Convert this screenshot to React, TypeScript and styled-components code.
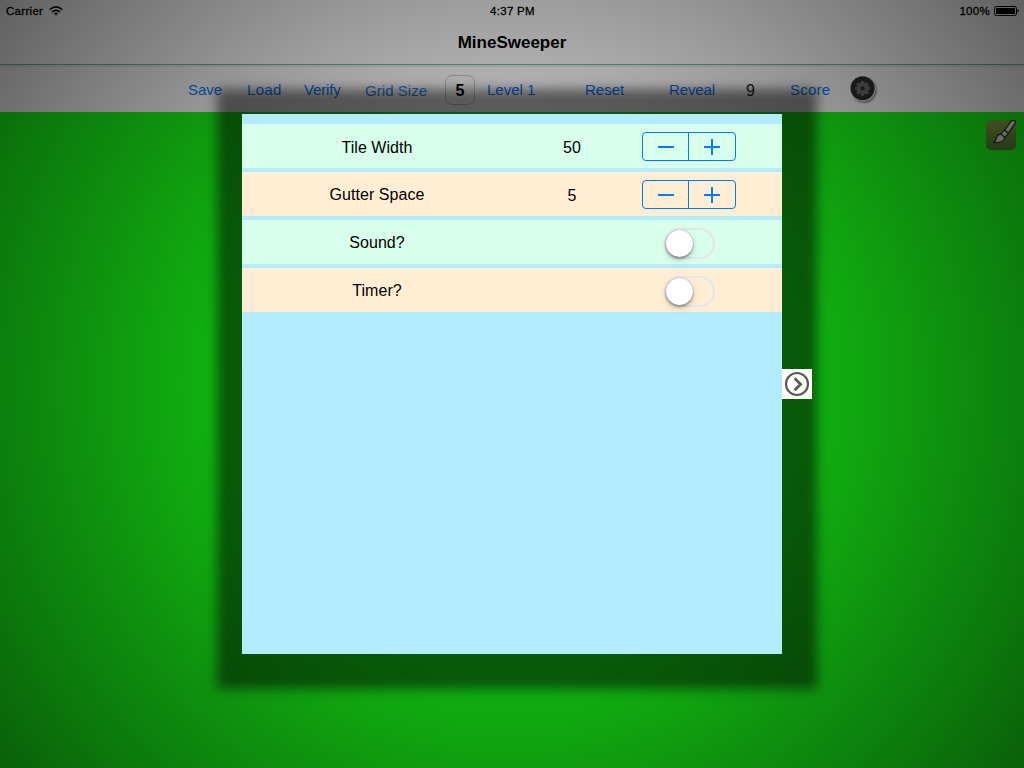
import React from 'react';
import styled, { createGlobalStyle } from 'styled-components';

const Global = createGlobalStyle`
  * { box-sizing: border-box; }
  body { margin: 0; overflow: hidden; font-family: "Liberation Sans", Arial, sans-serif; }
`;

const Screen = styled.div`
  position: relative;
  display: flex;
  flex-direction: column;
  width: 1024px;
  height: 768px;
  overflow: hidden;
  background: #18f818;
`;

const StatusBar = styled.div`
  display: grid;
  grid-template-columns: 1fr auto 1fr;
  align-items: center;
  height: 21px;
  padding: 1px 5px 0 6px;
  background: #f8f8f8;
  font-size: 11.5px;
  letter-spacing: 0.3px;
  -webkit-text-stroke: 0.3px #000;
`;

const StatusSide = styled.div<{ $end?: boolean }>`
  display: flex;
  align-items: center;
  gap: ${(p) => (p.$end ? 4 : 6)}px;
  justify-content: ${(p) => (p.$end ? 'flex-end' : 'flex-start')};
`;

const NavBar = styled.header`
  display: flex;
  justify-content: center;
  height: 46px;
  padding-top: 12px;
  background: #f8f8f8;
  border-bottom: 2px solid #cdf3e1;
  box-shadow: inset 0 -1px 0 #86ac9b;
  font-size: 17px;
  font-weight: 700;
  line-height: 20px;
`;

const Toolbar = styled.div`
  display: flex;
  align-items: center;
  height: 45px;
  padding-left: 188px;
  background: #f9f7f9;
`;

const ToolText = styled.span<{ $w: number; $gap: number; $tone?: string; $drop?: number; $ls?: number; $size?: number }>`
  flex: none;
  width: ${(p) => p.$w}px;
  margin-right: ${(p) => p.$gap}px;
  padding-top: ${(p) => p.$drop ?? 0}px;
  color: ${(p) => p.$tone ?? '#007aff'};
  font-size: ${(p) => p.$size ?? 15}px;
  line-height: 18px;
  letter-spacing: ${(p) => p.$ls ?? 0}px;
  white-space: nowrap;
`;

const SizeField = styled.div`
  flex: none;
  display: flex;
  align-items: center;
  justify-content: center;
  width: 30px;
  height: 30px;
  margin-right: 12px;
  padding-top: 2px;
  border: 1px solid #c4c4c4;
  border-radius: 7px;
  font-size: 16px;
  font-weight: 700;
`;

const GearIcon = styled.svg`
  flex: none;
  width: 30px;
  height: 30px;
  margin-bottom: 1px;
`;

const Board = styled.main`
  flex: 1;
  display: flex;
  align-items: flex-start;
  justify-content: flex-end;
  padding: 8px 8px 0 0;
`;

const Dim = styled.div`
  position: absolute;
  inset: 0;
  background: radial-gradient(circle 640px at 512px 384px, rgba(0, 0, 0, 0) 0, rgba(0, 0, 0, 0.61) 640px);
`;

const Dialog = styled.section`
  position: absolute;
  left: 242px;
  top: 114px;
  width: 540px;
  height: 540px;
  padding-top: 10px;
  display: flex;
  flex-direction: column;
  gap: 4px;
  background: #b3ebff;
  box-shadow: 5px 5px 11px 30px rgba(0, 0, 0, 0.5);
`;

const Row = styled.div<{ $warm?: boolean }>`
  display: grid;
  grid-template-columns: 270px 120px 150px;
  align-items: center;
  height: 44px;
  background: ${(p) => (p.$warm ? '#ffeed3' : '#d8ffeb')};
  font-size: 16px;
  line-height: 18px;
`;

const Label = styled.span<{ $drop: number }>`
  text-align: center;
  letter-spacing: 0.05px;
  padding-top: ${(p) => p.$drop}px;
`;

const Value = styled.span`
  text-align: center;
  padding-top: 4px;
`;

const Control = styled.div`
  display: flex;
  padding-left: 10px;
`;

const Stepper = styled.div`
  display: flex;
  width: 94px;
  height: 29px;
  border: 1px solid #007aff;
  border-radius: 4px;
`;

const StepButton = styled.button`
  flex: none;
  width: 45px;
  display: flex;
  align-items: center;
  justify-content: center;
  padding: 1px 0 0 1px;
  border: 0;
  background: none;
  & + & {
    width: 47px;
    padding-left: 0;
    border-left: 1px solid #007aff;
  }
`;

const Switch = styled.div`
  width: 51px;
  height: 31px;
  margin: 3px 0 0 22px;
  border: 2px solid #e5e5e5;
  border-radius: 16px;
`;

const Knob = styled.div`
  width: 27px;
  height: 27px;
  border-radius: 50%;
  background: #fff;
  box-shadow: 0 0 1px rgba(0, 0, 0, 0.4), 0 2px 3px rgba(0, 0, 0, 0.35), 0 3px 8px rgba(0, 0, 0, 0.12);
`;

const NextTab = styled.button`
  position: absolute;
  left: 540px;
  top: 255px;
  width: 30px;
  height: 30px;
  padding: 0;
  border: 0;
  background: #fffffa;
  svg { display: block; }
`;

const Minus = () => (
  <svg width="16" height="16"><path d="M0 8H16" stroke="#007aff" strokeWidth="2" /></svg>
);
const Plus = () => (
  <svg width="16" height="16"><path d="M0 8H16M8 0V16" stroke="#007aff" strokeWidth="2" /></svg>
);

const Wifi = () => (
  <svg width="14" height="10" viewBox="0 0 14 10" fill="none" stroke="#000" strokeWidth="1.5">
    <path d="M.8 3.6Q7-1.8 13.2 3.6M3 6Q7 2.5 11 6" />
    <path d="M4.9 7.4Q7 5.6 9.1 7.4L7 9.6Z" fill="#000" stroke="none" />
  </svg>
);

const Battery = () => (
  <svg width="25" height="10" viewBox="0 0 25 10">
    <rect x=".5" y=".5" width="22" height="9" rx="1.8" fill="none" stroke="#000" />
    <rect x="2" y="2" width="19" height="6" rx=".6" />
    <path d="M23.5 3.2Q25 3.7 25 5T23.5 6.8Z" />
  </svg>
);

const Gear = () => (
  <GearIcon viewBox="0 0 30 30">
    <defs>
      <filter id="gearShadow" x="-30%" y="-30%" width="160%" height="160%">
        <feDropShadow dx="1" dy="1.2" stdDeviation="1" floodOpacity=".6" />
      </filter>
    </defs>
    <circle cx="15.2" cy="15" r="12.2" fill="#dcdcdc" filter="url(#gearShadow)" />
    <circle cx="14.6" cy="14.3" r="12" fill="#2d2d2d" />
    <g fill="#6c6c6c">
      <circle cx="14.6" cy="14.4" r="5.6" />
      {[0, 45, 90, 135].map((a) => (
        <rect key={a} x="12.9" y="7" width="3.4" height="14.8" rx=".6" transform={`rotate(${a} 14.6 14.4)`} />
      ))}
    </g>
    <circle cx="14.6" cy="14.4" r="2" fill="#2d2d2d" />
  </GearIcon>
);

const Brush = () => (
  <svg width="30" height="31" viewBox="0 0 30 31">
    <defs>
      <linearGradient id="tile" x1="0" y1="0" x2="0" y2="1">
        <stop offset="0" stopColor="#8ca83c" />
        <stop offset="1" stopColor="#4c7832" />
      </linearGradient>
    </defs>
    <rect width="30" height="30" rx="5" fill="url(#tile)" />
    <g fill="#dedede" stroke="#183c1c" strokeWidth="1.2" strokeLinejoin="round">
      <path d="M18.6 10.3L25 1.2Q26.8 -.2 28.9 .8Q29.7 2 28.8 3.8L22.2 13.4Z" />
      <path d="M16.4 12L18.6 10.2L22.2 13.2L20.5 15.7L17.8 17.6L14.8 14.6Z" />
      <path d="M15.3 14.2Q11.3 14.2 10.5 18.2Q10 20.7 7.8 22.3Q13.5 23.5 17.4 20.4Q19 18.4 18.1 16.7Z" />
    </g>
  </svg>
);

const settings: { label: string; value?: string }[] = [
  { label: 'Tile Width', value: '50' },
  { label: 'Gutter Space', value: '5' },
  { label: 'Sound?' },
  { label: 'Timer?' },
];

export default function App() {
  return (
    <>
      <Global />
      <Screen>
        <StatusBar>
          <StatusSide>Carrier <Wifi /></StatusSide>
          <span>4:37 PM</span>
          <StatusSide $end>100% <Battery /></StatusSide>
        </StatusBar>
        <NavBar>MineSweeper</NavBar>
        <Toolbar>
          <ToolText $w={34} $gap={25}>Save</ToolText>
          <ToolText $w={35} $gap={22} $ls={0.3}>Load</ToolText>
          <ToolText $w={37} $gap={24} $ls={-0.15}>Verify</ToolText>
          <ToolText $w={62} $gap={18} $drop={2} $tone="#2b86e8" $ls={0.05}>Grid Size</ToolText>
          <SizeField>5</SizeField>
          <ToolText $w={48} $gap={50}>Level 1</ToolText>
          <ToolText $w={39} $gap={45}>Reset</ToolText>
          <ToolText $w={46} $gap={31} $ls={-0.1}>Reveal</ToolText>
          <ToolText $w={9} $gap={35} $drop={3} $tone="#222" $size={16}>9</ToolText>
          <ToolText $w={40} $gap={18} $ls={0.2}>Score</ToolText>
          <Gear />
        </Toolbar>
        <Board><Brush /></Board>
        <Dim />
        <Dialog>
          {settings.map((s, i) => (
            <Row key={s.label} $warm={i % 2 === 1}>
              <Label $drop={i === 0 ? 4 : 2}>{s.label}</Label>
              <Value>{s.value}</Value>
              <Control>
                {s.value ? (
                  <Stepper>
                    <StepButton aria-label="Decrease"><Minus /></StepButton>
                    <StepButton aria-label="Increase"><Plus /></StepButton>
                  </Stepper>
                ) : (
                  <Switch><Knob /></Switch>
                )}
              </Control>
            </Row>
          ))}
          <NextTab aria-label="Next">
            <svg width="30" height="30" fill="none" stroke="#5a5a5a">
              <circle cx="15" cy="15" r="11" strokeWidth="2.2" />
              <path d="M12.6 9.2L18.6 15.2L12.6 21.2" strokeWidth="2.8" />
            </svg>
          </NextTab>
        </Dialog>
      </Screen>
    </>
  );
}
